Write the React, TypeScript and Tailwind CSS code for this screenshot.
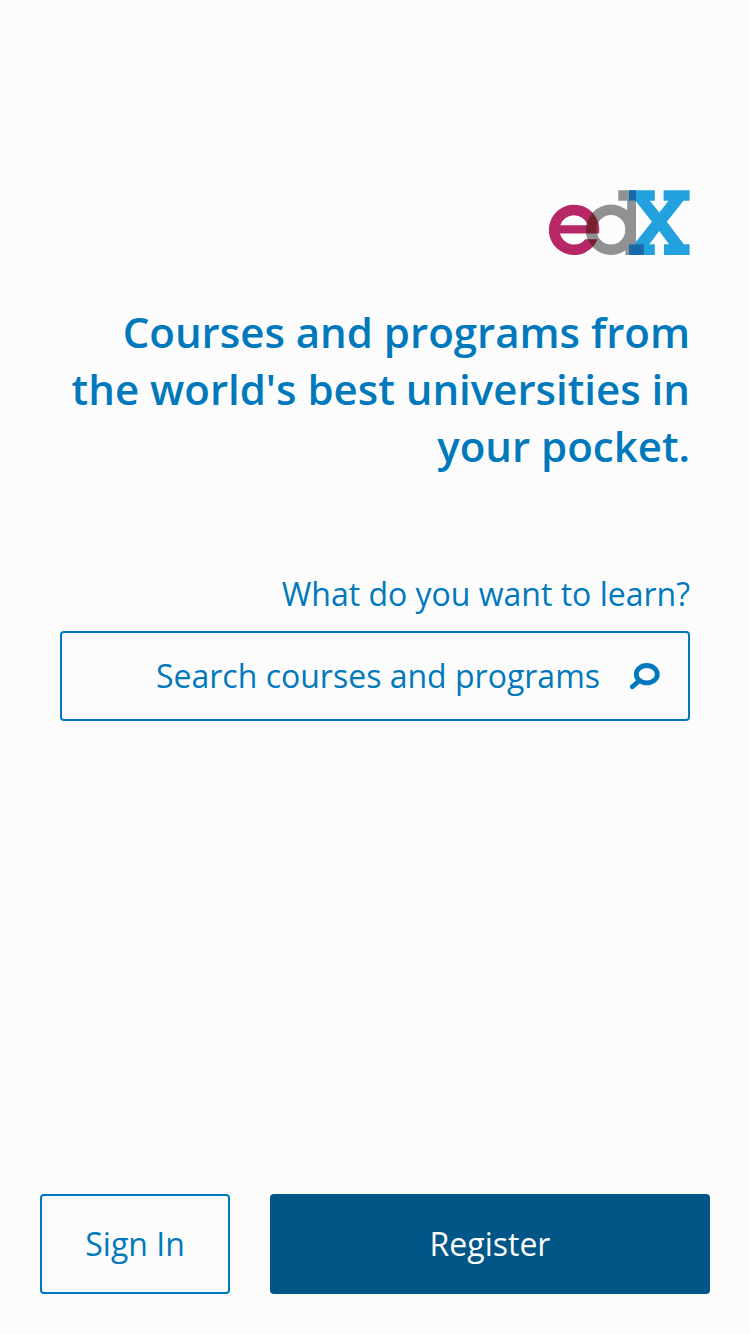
import React from "react";

const LETTER_E =
  "M50 43.6A25.2 25.2 0 1 0 48.5 49.2H36.3A14.6 14.6 0 0 1 10.9 43.6ZM11.2 35.2A14.6 14.6 0 0 1 38.8 35.2Z";

const BOWL_D =
  "M62 14.6A25.3 25.2 0 1 0 62 65A25.3 25.2 0 1 0 62 14.6ZM62 25A14.4 14.8 0 1 1 62 54.6A14.4 14.8 0 1 1 62 25Z";

function Logo() {
  return (
    <svg role="img" aria-label="edX" width="141" height="66" viewBox="0 0 141 66">
      <defs>
        <clipPath id="letter-e">
          <path d={LETTER_E} clipRule="evenodd" />
        </clipPath>
        <clipPath id="left-of-stem">
          <rect x="0" y="0" width="80" height="66" />
        </clipPath>
      </defs>
      <path d={LETTER_E} fill="#b72667" fillRule="evenodd" />
      <g clipPath="url(#left-of-stem)">
        <path d={BOWL_D} fill="#8f9192" fillRule="evenodd" />
      </g>
      <path d="M69.3 .3H87V65H76.4V22L78.2 20V10.7H69.3Z" fill="#8f9192" />
      <path d={BOWL_D} fill="#7a1f2e" fillRule="evenodd" clipPath="url(#letter-e)" />
      <path
        d="M80 .3H105.8V10.7H100.7L110.4 22.4L119.6 10.7H114.6V.3H140.6V10.7H134.5L117.8 31.7L134.8 54.2H140.6V65H115V54.2H120L110.3 41L100.4 54.2H105.8V65H80V54.2H85L102.9 31.7L86.5 10.7H80Z"
        fill="#23a1de"
      />
      <path d="M80 .3H87V10.7H80ZM80 54.2H94.8V65H80Z" fill="#166aa8" />
      <path d="M80 10.7H86.5V54.2H80Z" fill="#8f9192" />
    </svg>
  );
}

function SearchIcon() {
  return (
    <svg className="ml-7" width="32" height="28" viewBox="0 0 32 28" fill="none" stroke="#0079bc" aria-hidden="true">
      <ellipse cx="18.8" cy="12.2" rx="10.5" ry="8.7" strokeWidth="4.8" />
      <path d="M11.5 18.5L4.4 24.8" strokeWidth="4.8" strokeLinecap="round" />
    </svg>
  );
}

export default function App() {
  return (
    <div className="flex min-h-screen flex-col bg-[#fcfcfc] font-['Open_Sans',sans-serif] text-[#0079bc]">
      <main className="flex flex-1 flex-col items-end px-[60px] pt-[190px]">
        <Logo />
        <h1 className="mt-[47px] text-right text-[42px] leading-[57px] font-semibold">
          Courses and programs from the world's best universities in your pocket.
        </h1>
        <label htmlFor="search" className="mt-[98px] text-[32px] leading-[44px]">
          What do you want to learn?
        </label>
        <div className="mt-[15px] flex h-[90px] w-full items-center rounded border-2 border-[#0079bc] pr-7">
          <input
            id="search"
            type="text"
            placeholder="Search courses and programs"
            className="min-w-0 flex-1 bg-transparent text-right text-[32px] outline-none placeholder:text-[#0079bc]"
          />
          <SearchIcon />
        </div>
      </main>
      <footer className="flex gap-10 px-10 pb-10">
        <button type="button" className="h-[100px] w-[190px] rounded border-2 border-[#0079bc] text-[32px]">
          Sign In
        </button>
        <button type="button" className="h-[100px] flex-1 rounded bg-[#005686] text-[32px] text-[#fcfcfc]">
          Register
        </button>
      </footer>
    </div>
  );
}
